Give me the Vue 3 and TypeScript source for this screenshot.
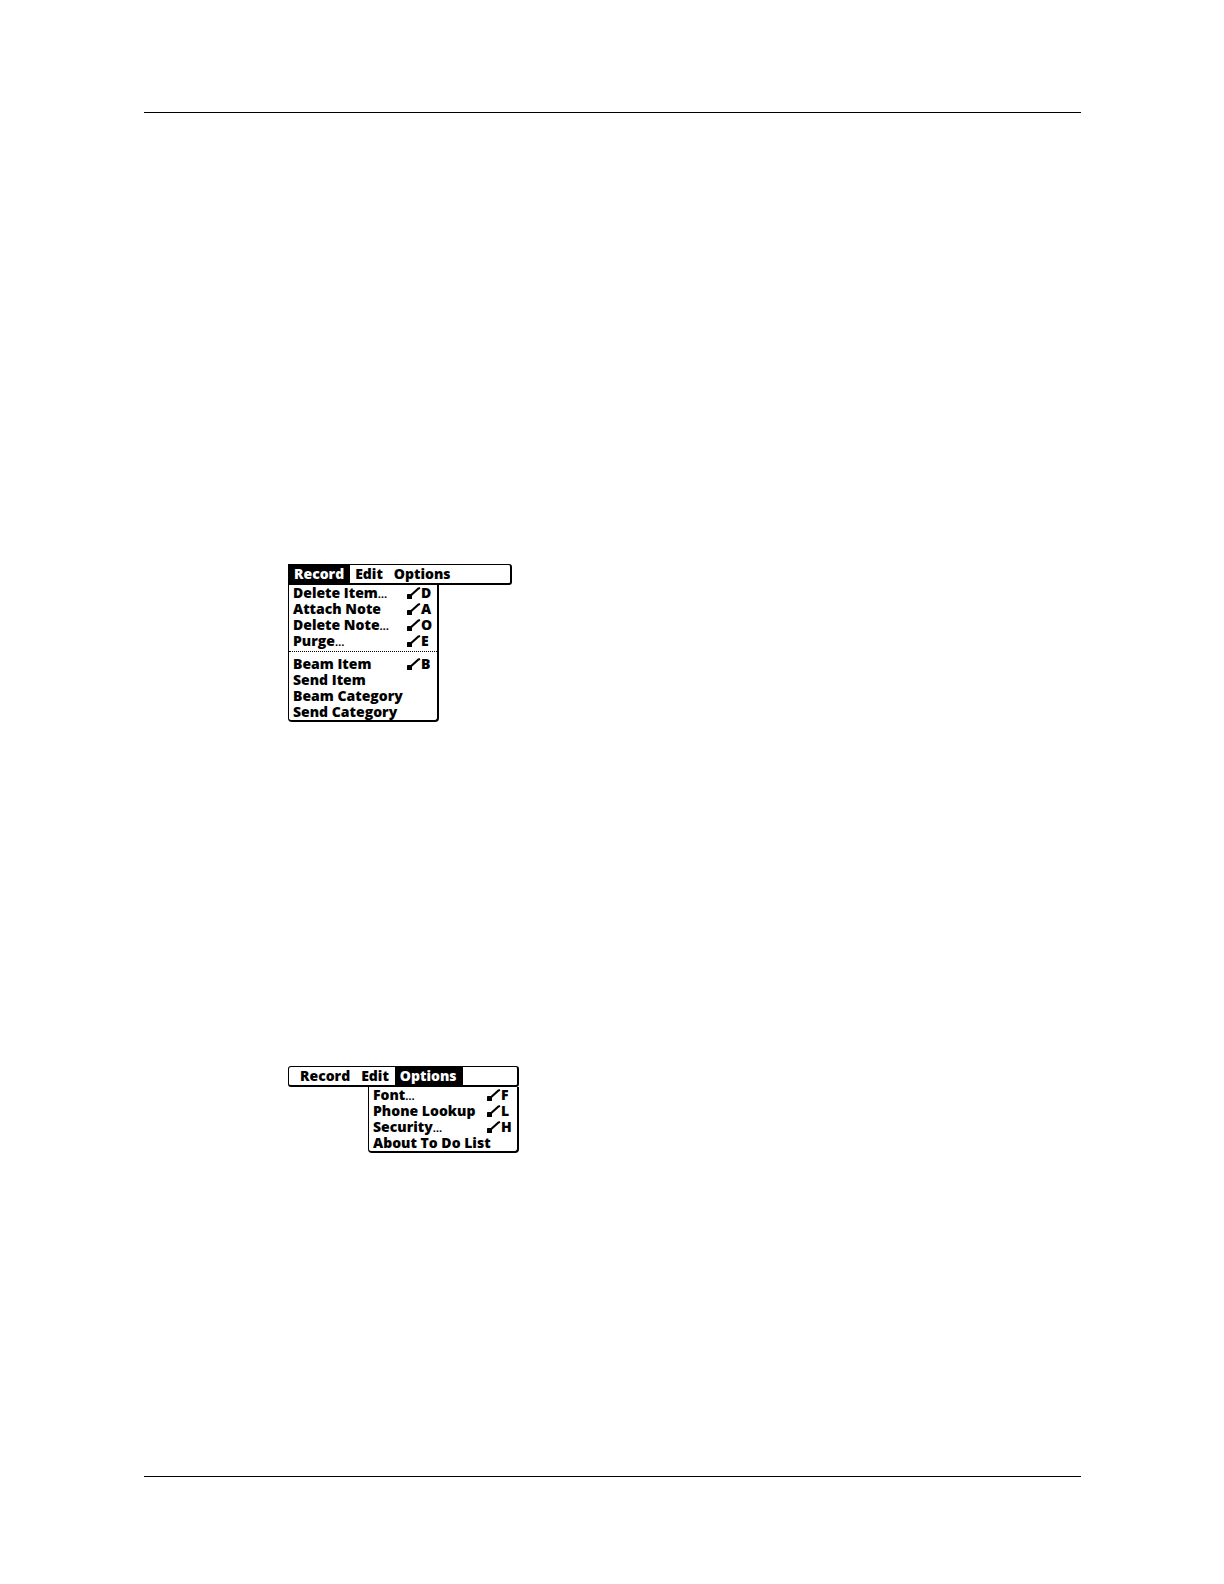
<script setup lang="ts">
interface MenuItem {
  label: string
  more?: boolean
  key?: string
  separated?: boolean
}
interface MenuFigure {
  id: string
  active: string
  items: MenuItem[]
}

const titles: string[] = ['Record', 'Edit', 'Options']

const figures: MenuFigure[] = [
  {
    id: 'record',
    active: 'Record',
    items: [
      { label: 'Delete Item', more: true, key: 'D' },
      { label: 'Attach Note', key: 'A' },
      { label: 'Delete Note', more: true, key: 'O' },
      { label: 'Purge', more: true, key: 'E' },
      { label: 'Beam Item', key: 'B', separated: true },
      { label: 'Send Item' },
      { label: 'Beam Category' },
      { label: 'Send Category' },
    ],
  },
  {
    id: 'options',
    active: 'Options',
    items: [
      { label: 'Font', more: true, key: 'F' },
      { label: 'Phone Lookup', key: 'L' },
      { label: 'Security', more: true, key: 'H' },
      { label: 'About To Do List' },
    ],
  },
]
</script>

<template>
  <main class="page">
    <hr class="rule" />
    <section v-for="fig in figures" :key="fig.id" class="figure" :class="fig.id">
      <nav class="bar">
        <button
          v-for="title in titles"
          :key="title"
          type="button"
          class="title"
          :class="{ active: title === fig.active }"
        >{{ title }}</button>
      </nav>
      <ul class="menu">
        <li v-for="item in fig.items" :key="item.label" :class="{ separated: item.separated }">
          <button type="button" class="item">
            <span class="label">{{ item.label }}<span v-if="item.more" class="dots">…</span></span>
            <template v-if="item.key">
              <svg class="stroke" viewBox="0 0 14 12" width="14" height="12" aria-hidden="true">
                <path d="M2 10 L11.2 1.6 L13 1" stroke="#000" stroke-width="2.1" fill="none" />
                <rect x="0" y="7" width="5" height="5" rx="0.6" fill="#000" />
              </svg>
              <span class="key">{{ item.key }}</span>
            </template>
          </button>
        </li>
      </ul>
    </section>
    <hr class="rule" />
  </main>
</template>

<style>
body {
  background: #fff;
}
</style>

<style scoped>
.page {
  padding: 112px 143px 107px 144px;
  color: #000;
  font: 800 14px/16px "Open Sans", "Noto Sans", sans-serif;
}
.rule {
  height: 1px;
  margin: 0;
  border: 0;
  background: #000;
}
.figure {
  margin-left: 144px;
}
.figure.record {
  width: 224px;
  margin-top: 451px;
}
.figure.options {
  width: 231px;
  margin-top: 344px;
  margin-bottom: 323px;
}
.bar {
  display: flex;
  box-sizing: border-box;
  height: 21px;
  border: 1px solid #000;
  border-right-width: 2px;
  border-bottom-width: 2px;
  border-radius: 3px;
}
.record .bar {
  border-top-left-radius: 0;
  border-bottom-left-radius: 0;
}
.options .bar {
  padding-left: 6px;
}
button {
  margin: 0;
  border: 0;
  background: none;
  color: inherit;
  font: inherit;
}
.title {
  padding: 0 6px 0 5px;
}
.title.active {
  background: #000;
  color: #fff;
}
.menu {
  box-sizing: border-box;
  width: 151px;
  margin: 0;
  padding: 0;
  list-style: none;
  border: 1px solid #000;
  border-top: 0;
  border-right-width: 2px;
  border-bottom-width: 2px;
  border-radius: 0 0 4px 4px;
}
.options .menu {
  margin-left: auto;
}
.separated {
  margin-top: 2px;
  padding-top: 4px;
  border-top: 1px dotted #000;
}
.item {
  display: flex;
  align-items: center;
  width: 100%;
  height: 16px;
  padding: 0 3px 0 4px;
  text-align: left;
  white-space: nowrap;
}
.label {
  flex: 1;
}
.dots {
  font-size: 11px;
  line-height: 1;
  font-weight: 700;
}
.key {
  width: 13px;
}
</style>
